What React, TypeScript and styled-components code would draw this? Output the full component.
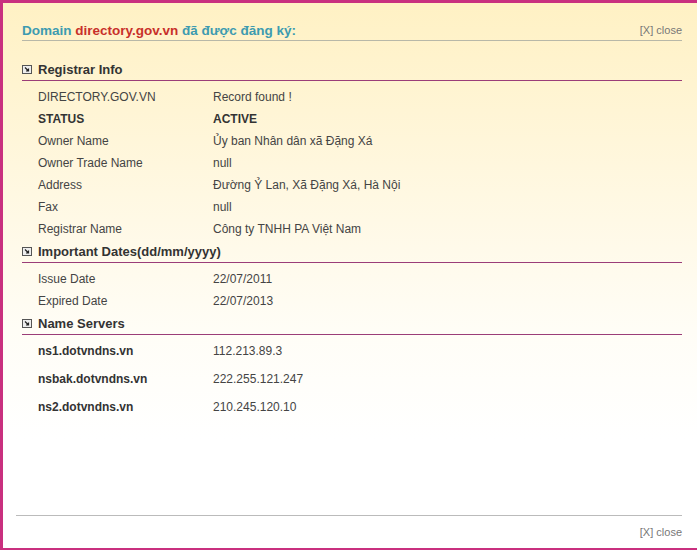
import styled, { createGlobalStyle } from 'styled-components';

const GlobalStyle = createGlobalStyle`
  html, body {
    margin: 0;
    padding: 0;
    background: #fff;
    overflow: hidden;
  }
  body {
    font-family: "Liberation Sans", Arial, sans-serif;
  }
`;

type Row = { label: string; value: string; strong?: boolean };

const registrar: Row[] = [
  { label: 'DIRECTORY.GOV.VN', value: 'Record found !' },
  { label: 'STATUS', value: 'ACTIVE', strong: true },
  { label: 'Owner Name', value: 'Ủy ban Nhân dân xã Đặng Xá' },
  { label: 'Owner Trade Name', value: 'null' },
  { label: 'Address', value: 'Đường Ỷ Lan, Xã Đặng Xá, Hà Nội' },
  { label: 'Fax', value: 'null' },
  { label: 'Registrar Name', value: 'Công ty TNHH PA Việt Nam' },
];

const dates: Row[] = [
  { label: 'Issue Date', value: '22/07/2011' },
  { label: 'Expired Date', value: '22/07/2013' },
];

const servers: Row[] = [
  { label: 'ns1.dotvndns.vn', value: '112.213.89.3' },
  { label: 'nsbak.dotvndns.vn', value: '222.255.121.247' },
  { label: 'ns2.dotvndns.vn', value: '210.245.120.10' },
];

function ToggleIcon() {
  return (
    <svg width="10" height="9" viewBox="0 0 10 9">
      <rect x="0.5" y="0.5" width="9" height="8" fill="#eee" stroke="#555" />
      <path d="M3 2.5 L6.5 6 M6.5 3.5 L6.5 6 L4 6" stroke="#222" strokeWidth="1.2" fill="none" />
    </svg>
  );
}

function Section({ title, rows, tall }: { title: string; rows: Row[]; tall?: boolean }) {
  return (
    <div>
      <SectionHead>
        <ToggleIcon />
        <span>{title}</span>
      </SectionHead>
      <Rows $tall={tall}>
        {rows.map((r) => (
          <InfoRow key={r.label} $tall={tall}>
            <Label $bold={r.strong || tall}>{r.label}</Label>
            <Value $bold={r.strong}>{r.value}</Value>
          </InfoRow>
        ))}
      </Rows>
    </div>
  );
}

function App() {
  return (
    <>
      <GlobalStyle />
      <Popup>
        <Header>
          <Title>
            Domain <DomainName>directory.gov.vn</DomainName> đã được đăng ký:
          </Title>
          <Close>[X] close</Close>
        </Header>
        <Body>
          <Section title="Registrar Info" rows={registrar} />
          <Section title="Important Dates(dd/mm/yyyy)" rows={dates} />
          <Section title="Name Servers" rows={servers} tall />
        </Body>
        <Footer>
          <Close>[X] close</Close>
        </Footer>
      </Popup>
    </>
  );
}

const Popup = styled.div`
  box-sizing: border-box;
  width: 720px;
  height: 550px;
  display: flex;
  flex-direction: column;
  border-left: 3px solid #c9307f;
  border-top: 3px solid #c9307f;
  border-bottom: 2px solid #c9307f;
  padding: 0 38px 0 19px;
  background: linear-gradient(#fff1c4 0%, #fff8e2 35%, #fffdf6 60%, #ffffff 80%);
`;

const Header = styled.div`
  display: flex;
  justify-content: space-between;
  align-items: flex-end;
  padding-top: 20px;
  padding-bottom: 2px;
  border-bottom: 1px solid #b8b8a8;
`;

const Title = styled.div`
  font-size: 13.5px;
  font-weight: bold;
  color: #3d9bb0;
`;

const DomainName = styled.span`
  color: #c8302a;
`;

const Close = styled.span`
  font-size: 11px;
  color: #777;
  padding-bottom: 2px;
`;

const Body = styled.div`
  flex: 1;
  padding-top: 17px;
`;

const SectionHead = styled.div`
  display: flex;
  align-items: center;
  gap: 6px;
  height: 22px;
  border-bottom: 1px solid #9b3d78;
  font-size: 13px;
  font-weight: bold;
  color: #333;
`;

const Rows = styled.div<{ $tall?: boolean }>`
  padding-top: ${(p) => (p.$tall ? '2px' : '5px')};
`;

const InfoRow = styled.div<{ $tall?: boolean }>`
  display: flex;
  height: ${(p) => (p.$tall ? '28px' : '22px')};
  align-items: center;
  font-size: 12px;
  color: #444;
`;

const Label = styled.div<{ $bold?: boolean }>`
  width: 175px;
  padding-left: 16px;
  font-weight: ${(p) => (p.$bold ? 'bold' : 'normal')};
  color: ${(p) => (p.$bold ? '#333' : '#444')};
`;

const Value = styled.div<{ $bold?: boolean }>`
  font-weight: ${(p) => (p.$bold ? 'bold' : 'normal')};
  color: ${(p) => (p.$bold ? '#333' : '#444')};
`;

const Footer = styled.div`
  display: flex;
  justify-content: flex-end;
  margin-left: -6px;
  border-top: 1px solid #bbb;
  padding-top: 10px;
  height: 22px;
`;

export default App;
